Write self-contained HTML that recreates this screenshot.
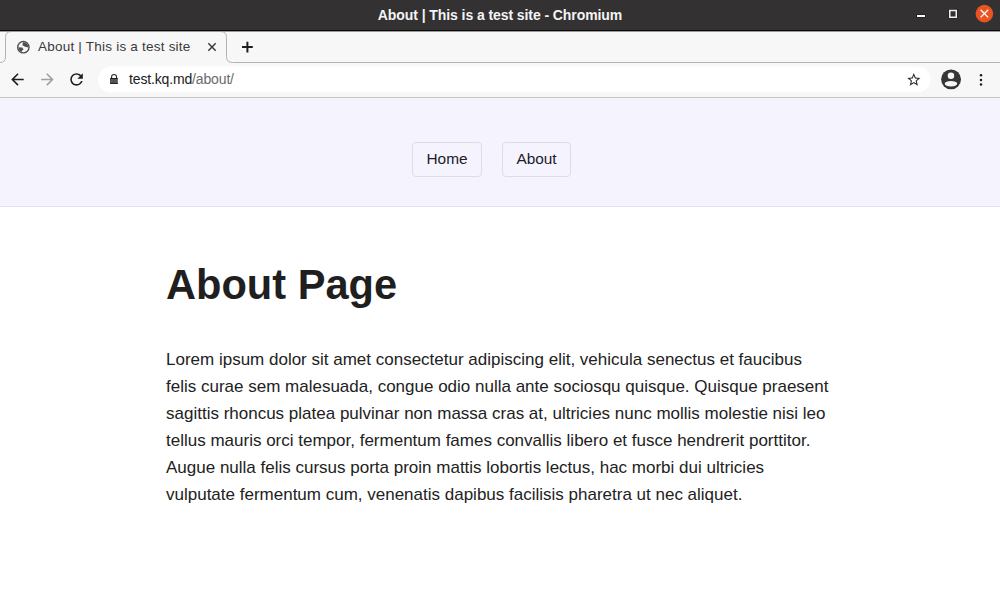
<!DOCTYPE html>
<html><head><meta charset="utf-8">
<style>
*{margin:0;padding:0;box-sizing:border-box}
html,body{width:1000px;height:609px;overflow:hidden;background:#fff;font-family:"Liberation Sans",sans-serif}
.abs{position:absolute}
#chrome{position:absolute;left:0;top:0;width:1000px;height:98px;background:#f7f7f7}
#title{position:absolute;left:0;top:0;width:1000px;height:30px;background:#333132}
#title .t{position:absolute;left:0;width:1000px;top:7px;text-align:center;color:#f4f4f4;font-weight:bold;font-size:14px;line-height:16px;letter-spacing:-0.08px}
#tabtitle{position:absolute;left:38px;top:39.4px;font-size:13.5px;letter-spacing:0.22px;line-height:16px;color:#3a3a3a;white-space:nowrap}
#url{position:absolute;left:129px;top:71px;font-size:14px;letter-spacing:-0.15px;line-height:16px;color:#202020;white-space:nowrap}
#url span{color:#6b6b6b}
svg{position:absolute;left:0;top:0}
#page{position:absolute;left:0;top:98px;width:1000px;height:511px;background:#fff}
#nav{position:absolute;left:0;top:0;width:1000px;height:109px;background:#f5f3fe;border-bottom:1px solid #e2e1ea}
.btn{position:absolute;top:44px;height:35px;border:1px solid #dedde6;border-radius:4px;font-size:15.4px;color:#1c1c2a;line-height:32.5px;text-align:center}
h1{position:absolute;left:166px;top:159px;font-size:41.6px;font-weight:bold;color:#1f1f1f;line-height:56px;white-space:nowrap}
p{position:absolute;left:166px;top:248px;width:670px;font-size:17px;line-height:27px;color:#222}
</style></head><body>
<div id="chrome">
  <div id="title"><div class="t">About | This is a test site - Chromium</div></div>
    <svg width="1000" height="98" viewBox="0 0 1000 98">
    <rect x="98" y="66.6" width="832.6" height="25.6" rx="12.8" fill="#fff"/>
    <!-- title bar bottom black line -->
    <rect x="0" y="30" width="1000" height="1" fill="#0a0a0a"/>
        <!-- tab strip bottom line + tab outline -->
    <path d="M0 62.5 Q5.5 62.5 5.5 57 L5.5 37.5 Q5.5 31.5 11.5 31.5 L220.5 31.5 Q226.5 31.5 226.5 37.5 L226.5 56.5 Q226.5 62.5 232.5 62.5 L1000 62.5" fill="none" stroke="#b4b4b4" stroke-width="1"/>
    <rect x="0" y="97" width="1000" height="1" fill="#c6c6c6"/>
    <rect x="0" y="31" width="1000" height="1" fill="#9a9a9a"/>
    <!-- window controls -->
    <rect x="916.5" y="14.5" width="9" height="3" fill="#151515"/><rect x="917" y="15" width="8" height="2" fill="#f8f8f8"/>
    <rect x="949" y="9.75" width="8" height="8.25" fill="none" stroke="#151515" stroke-width="0.6"/><rect x="949.75" y="10.5" width="6.5" height="6.75" fill="none" stroke="#f0f0f0" stroke-width="1.5"/>
    <circle cx="984.4" cy="13.6" r="8.8" fill="#e95420"/>
    <path d="M980.6 9.8 L988.2 17.4 M988.2 9.8 L980.6 17.4" stroke="#fff" stroke-width="1.3"/>
    <!-- globe favicon -->
    <defs><clipPath id="gc"><circle cx="23.35" cy="47.2" r="4.95"/></clipPath></defs>
    <circle cx="23.35" cy="47.2" r="6.35" fill="#4f4f4f"/>
    <g clip-path="url(#gc)">
      <rect x="17" y="41" width="13" height="13" fill="#f7f7f7"/>
      <path d="M23.7 40.5 L30 40.5 L30 47.5 L28.1 47.6 L25.1 46.8 L22.3 45.3 L22.9 43 Z" fill="#4f4f4f"/>
      <path d="M16 47.1 L22.3 47.4 L23.6 49.4 L22.1 50.6 L21.4 52.6 L16 52.6 Z" fill="#4f4f4f"/>
    </g>
    <!-- tab close -->
    <path d="M208.3 43.3 L215.7 50.7 M215.7 43.3 L208.3 50.7" stroke="#3c3c3c" stroke-width="1.5"/>
    <!-- new tab plus -->
    <path d="M242 47.1 H252.8 M247.4 41.7 V52.5" stroke="#1e1e1e" stroke-width="2"/>
    <!-- back -->
    <g transform="translate(8.1 70.05) scale(0.78125)">
      <path fill="#1f1f1f" d="M20 11H7.83l5.59-5.59L12 4l-8 8 8 8 1.41-1.41L7.83 13H20v-2z"/>
    </g>
    <!-- forward -->
    <g transform="translate(38.0 70.05) scale(0.78125)">
      <path fill="#a0a0a0" d="M12 4l-1.41 1.41L16.17 11H4v2h12.17l-5.58 5.59L12 20l8-8z"/>
    </g>
    <!-- reload -->
    <g transform="translate(67.2 70.05) scale(0.78125)">
      <path fill="#1f1f1f" d="M17.65 6.35C16.2 4.9 14.21 4 12 4c-4.42 0-7.99 3.58-7.99 8s3.57 8 7.99 8c3.73 0 6.84-2.550 7.73-6h-2.08c-.82 2.33-3.04 4-5.65 4-3.31 0-6-2.69-6-6s2.69-6 6-6c1.66 0 3.14.69 4.22 1.78L13 11h7V4l-2.35 2.35z"/>
    </g>
    <!-- lock -->
    <path d="M111.55 78.2 V76.95 A2.5 2.5 0 0 1 116.55 76.95 V78.2" fill="none" stroke="#2a2a2a" stroke-width="1.1"/>
    <rect x="110" y="78" width="7.8" height="5.9" rx="0.5" fill="#555"/>
    <rect x="110" y="78" width="7.8" height="1" fill="#222"/>
    <rect x="110" y="82.9" width="7.8" height="1" fill="#222"/>
    <!-- star -->
    <g transform="translate(905.9 71.8) scale(0.66)">
      <path fill="#2a2a2a" d="M22 9.24l-7.19-.62L12 2 9.19 8.63 2 9.24l5.46 4.73L5.820 21 12 17.27 18.18 21l-1.63-7.03L22 9.24zM12 15.4l-3.76 2.27 1-4.28-3.32-2.88 4.38-.38L12 6.1l1.71 4.04 4.38.38-3.32 2.88 1 4.28L12 15.4z"/>
    </g>
    <!-- avatar -->
    <circle cx="951.05" cy="79.35" r="9.95" fill="#363636"/>
    <circle cx="950.95" cy="75.7" r="3.25" fill="#f7f7f7"/>
    <ellipse cx="950.95" cy="83.75" rx="6.2" ry="2.7" fill="#f7f7f7"/>
    <!-- menu dots -->
    <circle cx="981" cy="75.3" r="1.25" fill="#1e1e1e"/>
    <circle cx="981" cy="79.9" r="1.25" fill="#1e1e1e"/>
    <circle cx="981" cy="84.6" r="1.25" fill="#1e1e1e"/>
  </svg>
  <div id="tabtitle">About | This is a test site</div>
  <div id="url">test.kq.md<span>/about/</span></div>
</div>
<div id="page">
<div id="nav">
<div class="btn" style="left:412px;width:70px">Home</div>
<div class="btn" style="left:502px;width:69px">About</div>
</div>
<h1>About Page</h1>
<p>Lorem ipsum dolor sit amet consectetur adipiscing elit, vehicula senectus et faucibus felis curae sem malesuada, congue odio nulla ante sociosqu quisque. Quisque praesent sagittis rhoncus platea pulvinar non massa cras at, ultricies nunc mollis molestie nisi leo tellus mauris orci tempor, fermentum fames convallis libero et fusce hendrerit porttitor. Augue nulla felis cursus porta proin mattis lobortis lectus, hac morbi dui ultricies vulputate fermentum cum, venenatis dapibus facilisis pharetra ut nec aliquet.</p>
</div>
</body></html>
